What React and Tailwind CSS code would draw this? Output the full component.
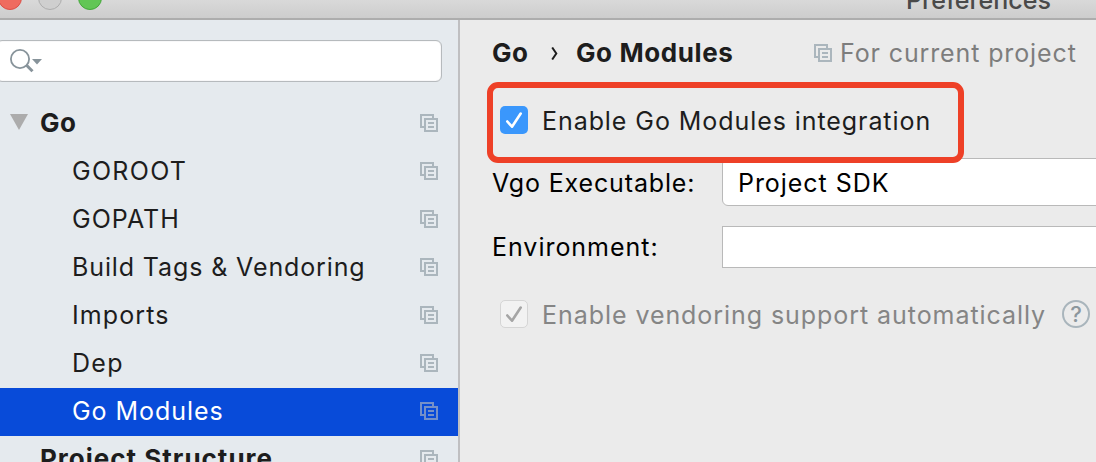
import React from "react";

function CopyIcon({ className = "" }) {
  return (
    <svg className={`block h-[18px] w-[18px] shrink-0 ${className}`} viewBox="0 0 18 18" fill="none" stroke="currentColor" strokeWidth="2">
      <path d="M4 13H1V1h12v3M5 5h12v12H5zM8 9h6M8 13h6" />
    </svg>
  );
}

const items = [
  { label: "GOROOT", tracking: "tracking-[1.3px]" },
  { label: "GOPATH", tracking: "tracking-[1px]" },
  { label: "Build Tags & Vendoring", tracking: "tracking-[0.88px]" },
  { label: "Imports", tracking: "tracking-[1.1px]" },
  { label: "Dep", tracking: "tracking-[1.3px]" },
  { label: "Go Modules", tracking: "tracking-[0.95px]", selected: true },
];

function Sidebar() {
  return (
    <aside className="flex w-[460px] shrink-0 flex-col border-r-2 border-[#bfbfc1] bg-[#e5eaee] pt-5">
      <div className="-ml-1 flex h-[42px] w-[446px] shrink-0 items-center rounded-md border border-[#b6babd] bg-white pl-[13px] shadow-[inset_0_0_1px_#b6babd]">
        <svg className="h-6 w-8" viewBox="0 0 32 24" fill="none" stroke="#87939a">
          <circle cx="10" cy="10" r="9.1" strokeWidth="1.8" />
          <path d="M16.3 16l6.2 6.3" strokeWidth="3" />
          <path d="M22 10h10l-5 5.5z" fill="#87939a" stroke="none" />
        </svg>
      </div>
      <nav className="mt-[18px] shrink-0">
        <div className="flex h-12 items-center pr-5 pb-0.5 pl-[10px]">
          <svg className="mr-3 mb-0.5 h-4 w-[18px]" viewBox="0 0 18 16">
            <path d="M0 0h18L9 16z" fill="#acacac" />
          </svg>
          <span className="flex-1 text-[26px] leading-8 font-bold tracking-[0.4px]">Go</span>
          <CopyIcon className="text-[#abb6bd]" />
        </div>
        {items.map((item) => (
          <div key={item.label} className={`flex h-12 items-center pr-5 pb-0.5 pl-[72px] ${item.selected ? "bg-[#084bd9] text-white" : ""}`}>
            <span className={`flex-1 ${item.tracking}`}>{item.label}</span>
            <CopyIcon className={item.selected ? "text-[#7590c8]" : "text-[#abb6bd]"} />
          </div>
        ))}
        <div className="flex h-12 items-center pr-5 pb-0.5 pl-10">
          <span className="flex-1 text-[26px] leading-8 font-bold tracking-[1px]">Project Structure</span>
          <CopyIcon className="text-[#abb6bd]" />
        </div>
      </nav>
    </aside>
  );
}

function Checkbox({ disabled }) {
  return (
    <span className={`flex h-7 w-7 shrink-0 items-center justify-center rounded-[5px] ${disabled ? "border border-[#d5d5d5] bg-[#f2f2f2] text-[#a5a5a5]" : "bg-[#3a97fc] text-white"}`}>
      <svg className="h-5 w-5 shrink-0" viewBox="0 0 20 20" fill="none" stroke="currentColor" strokeWidth="2.6" strokeLinecap="round" strokeLinejoin="round">
        <path d="M3.3 11.5L8 16.7 16.7 3.5" />
      </svg>
    </span>
  );
}

function Panel() {
  return (
    <main className="flex min-w-0 flex-1 flex-col">
      <header className="flex h-[62px] shrink-0 items-center pt-1 pl-8 font-bold">
        <span className="w-[59px] shrink-0 text-[26px] leading-8 tracking-[0.4px]">Go</span>
        <svg className="mr-[18px] h-[13px] w-[7px] shrink-0" viewBox="0 0 7 13" fill="none" stroke="#1d1d1d" strokeWidth="2">
          <path d="M1.2 0.5L5.3 6.5 1.2 12.5" />
        </svg>
        <span className="w-[238px] shrink-0 text-[26px] leading-8 tracking-[0.6px]">Go Modules</span>
        <CopyIcon className="text-[#abb6bd]" />
        <span className="ml-2 shrink-0 font-normal tracking-[0.88px] text-[#7d7d7d]">For current project</span>
      </header>
      <div className="relative z-10 ml-[27px] flex h-[81px] w-[477px] shrink-0 items-start rounded-[11px] border-[6px] border-[#ee4027] bg-[#ebebeb] pt-[18px] pl-[7px]">
        <Checkbox />
        <span className="ml-3.5 pt-px leading-7 tracking-[0.93px]">Enable Go Modules integration</span>
      </div>
      <div className="-mt-[5px] flex h-12 shrink-0 items-center pl-8 text-black">
        <span className="w-[230px] shrink-0 pt-0.5 tracking-[0.85px]">Vgo Executable:</span>
        <div className="-mr-2 flex h-12 flex-1 items-center rounded-md border border-[#b9b9b9] bg-white pt-0.5 pl-[15px] tracking-[0.95px]">Project SDK</div>
      </div>
      <div className="mt-5 flex h-[42px] shrink-0 items-center pl-8 text-black">
        <span className="w-[230px] shrink-0 tracking-[0.97px]">Environment:</span>
        <div className="-mr-2 h-[42px] flex-1 border border-[#b9b9b9] bg-white" />
      </div>
      <div className="mt-8 flex h-7 shrink-0 items-center pl-10 text-[#858585]">
        <Checkbox disabled />
        <span className="ml-3.5 w-[520px] shrink-0 pt-0.5 tracking-[0.94px]">Enable vendoring support automatically</span>
        <span className="flex h-7 w-7 shrink-0 items-center justify-center rounded-full border-2 border-[#a9b5bc] text-[22px] font-medium text-[#8c979d]">?</span>
      </div>
    </main>
  );
}

export default function App() {
  return (
    <div className="flex h-[462px] w-[1096px] flex-col overflow-hidden bg-[#ebebeb] font-['Inter',sans-serif] text-[25px] leading-8 whitespace-nowrap text-[#1d1d1d]">
      <div className="flex h-5 shrink-0 items-end overflow-hidden border-b-2 border-[#adadad] bg-linear-to-b from-[#d9d9d9] to-[#cdcdcd]">
        <div className="-ml-0.5 flex w-[908px] shrink-0 gap-4 pb-2">
          <span className="h-6 w-6 rounded-full border border-[#db5048] bg-[#ef6b5f]" />
          <span className="h-6 w-6 rounded-full border border-[#adadad] bg-[#cfcfcf]" />
          <span className="h-6 w-6 rounded-full border border-[#44a73a] bg-[#62c655]" />
        </div>
        <span className="pb-0.5 font-medium tracking-[0px] text-[#4a4a4a]">Preferences</span>
      </div>
      <div className="flex min-h-0 flex-1">
        <Sidebar />
        <Panel />
      </div>
    </div>
  );
}
